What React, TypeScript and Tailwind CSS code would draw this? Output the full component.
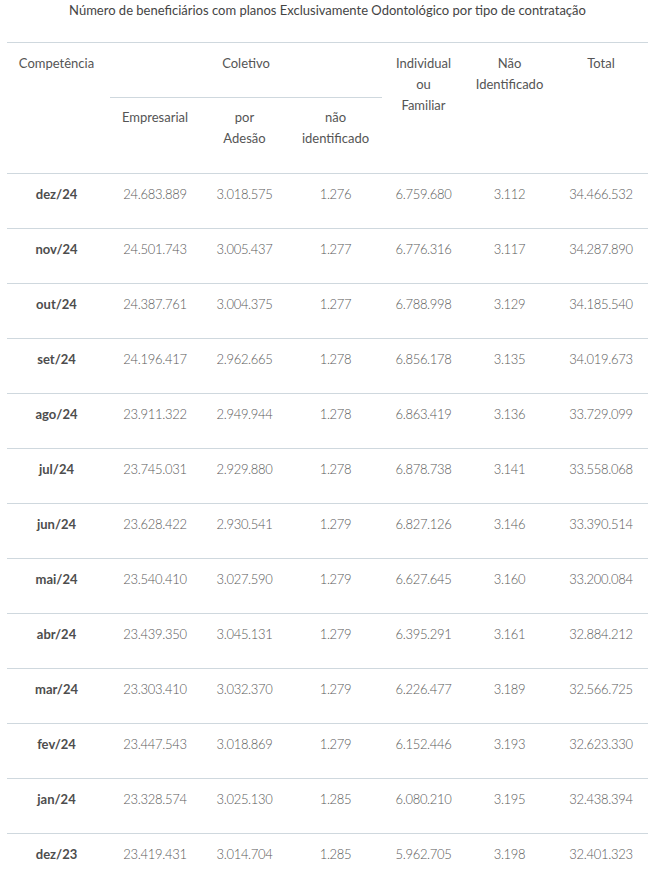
import React from "react";

const rows: string[][] = [
  ["dez/24", "24.683.889", "3.018.575", "1.276", "6.759.680", "3.112", "34.466.532"],
  ["nov/24", "24.501.743", "3.005.437", "1.277", "6.776.316", "3.117", "34.287.890"],
  ["out/24", "24.387.761", "3.004.375", "1.277", "6.788.998", "3.129", "34.185.540"],
  ["set/24", "24.196.417", "2.962.665", "1.278", "6.856.178", "3.135", "34.019.673"],
  ["ago/24", "23.911.322", "2.949.944", "1.278", "6.863.419", "3.136", "33.729.099"],
  ["jul/24", "23.745.031", "2.929.880", "1.278", "6.878.738", "3.141", "33.558.068"],
  ["jun/24", "23.628.422", "2.930.541", "1.279", "6.827.126", "3.146", "33.390.514"],
  ["mai/24", "23.540.410", "3.027.590", "1.279", "6.627.645", "3.160", "33.200.084"],
  ["abr/24", "23.439.350", "3.045.131", "1.279", "6.395.291", "3.161", "32.884.212"],
  ["mar/24", "23.303.410", "3.032.370", "1.279", "6.226.477", "3.189", "32.566.725"],
  ["fev/24", "23.447.543", "3.018.869", "1.279", "6.152.446", "3.193", "32.623.330"],
  ["jan/24", "23.328.574", "3.025.130", "1.285", "6.080.210", "3.195", "32.438.394"],
  ["dez/23", "23.419.431", "3.014.704", "1.285", "5.962.705", "3.198", "32.401.323"],
];

const th = "align-top text-center font-normal text-[13px] leading-[21px] text-[#555]";

const App = () => {
  return (
    <div className="min-h-[880px] bg-white font-['Lato','Liberation_Sans',sans-serif]">
      <h1 className="pt-[1px] text-center text-[13px] leading-[18px] text-[#444]">
        Número de beneficiários com planos Exclusivamente Odontológico por tipo de contratação
      </h1>
      <div className="ml-[7px] mt-[23px] w-[641px]">
        <table className="w-full table-fixed border-collapse">
          <colgroup>
            <col className="w-[103px]" />
            <col className="w-[90px]" />
            <col className="w-[89px]" />
            <col className="w-[93px]" />
            <col className="w-[83px]" />
            <col className="w-[89px]" />
            <col className="w-[94px]" />
          </colgroup>
          <thead>
            <tr className="border-t border-[#cfd8de]">
              <th rowSpan={2} className={`${th} pt-[10px] pr-[4px]`}>Competência</th>
              <th colSpan={3} className={`${th} h-[55px] border-b border-[#cfd8de] pt-[10px]`}>Coletivo</th>
              <th rowSpan={2} className={`${th} pt-[10px]`}>Individual<br />ou<br />Familiar</th>
              <th rowSpan={2} className={`${th} pt-[10px]`}>Não<br />Identificado</th>
              <th rowSpan={2} className={`${th} pt-[10px]`}>Total</th>
            </tr>
            <tr className="border-b border-[#cfd8de]">
              <th className={`${th} h-[76px] pt-[9px]`}>Empresarial</th>
              <th className={`${th} pt-[9px] leading-[20px]`}>por<br />Adesão</th>
              <th className={`${th} pt-[9px] leading-[20px]`}>não<br />identificado</th>
            </tr>
          </thead>
          <tbody>
            {rows.map((r) => (
              <tr key={r[0]} className="border-b border-[#cfd8de]">
                {r.map((c, i) => (
                  <td
                    key={i}
                    className={
                      i === 0
                        ? "h-[55px] pb-[13px] pr-[4px] text-center align-middle text-[13px] font-bold text-[#4d4d4d]"
                        : "h-[55px] pb-[13px] text-center align-middle text-[13px] font-light tracking-[-0.3px] text-[#5a5a5a]"
                    }
                  >
                    {c}
                  </td>
                ))}
              </tr>
            ))}
          </tbody>
        </table>
      </div>
    </div>
  );
};

export default App;
